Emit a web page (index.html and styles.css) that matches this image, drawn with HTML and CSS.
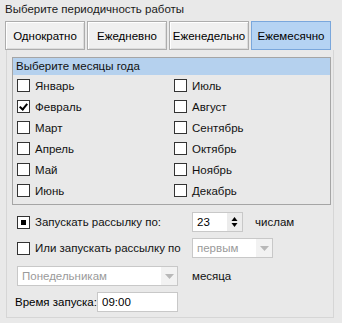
FILE: index.html
```html
<!DOCTYPE html>
<html>
<head>
    <title>Периодичность</title>
    <link rel="stylesheet" href="styles.css">
</head>
<body>
    <div class="window">
        <div class="title">Выберите периодичность работы</div>
        <div class="tabs">
            <button class="tab">Однократно</button>
            <button class="tab">Ежедневно</button>
            <button class="tab">Еженедельно</button>
            <button class="tab active">Ежемесячно</button>
        </div>
        <div class="panel">
            <div class="group">
                <div class="group-head">Выберите месяцы года</div>
                <div class="months">
                    <label class="row"><span class="box"></span>Январь</label>
                    <label class="row"><span class="box"></span>Июль</label>
                    <label class="row"><span class="box checked"></span>Февраль</label>
                    <label class="row"><span class="box"></span>Август</label>
                    <label class="row"><span class="box"></span>Март</label>
                    <label class="row"><span class="box"></span>Сентябрь</label>
                    <label class="row"><span class="box"></span>Апрель</label>
                    <label class="row"><span class="box"></span>Октябрь</label>
                    <label class="row"><span class="box"></span>Май</label>
                    <label class="row"><span class="box"></span>Ноябрь</label>
                    <label class="row"><span class="box"></span>Июнь</label>
                    <label class="row"><span class="box"></span>Декабрь</label>
                </div>
            </div>

            <div class="line line-first">
                <label class="row wide"><span class="box partial"></span>Запускать рассылку по:</label>
                <div class="spin">
                    <span class="spin-val">23</span>
                    <span class="spin-btn">
                        <svg width="7" height="12" viewBox="0 0 7 12"><path d="M3.5 1 L6.5 5 H0.5 Z M3.5 11 L6.5 7 H0.5 Z" fill="#000"/></svg>
                    </span>
                </div>
                <span class="after">числам</span>
            </div>

            <div class="line">
                <label class="row wide"><span class="box"></span>Или запускать рассылку по</label>
                <div class="combo small">
                    <span class="combo-val">первым</span>
                    <span class="combo-btn"><svg width="9" height="5" viewBox="0 0 9 5"><path d="M0 0 H9 L4.5 5 Z" fill="#b8b8b8"/></svg></span>
                </div>
            </div>

            <div class="line line-day">
                <div class="combo big">
                    <span class="combo-val">Понедельникам</span>
                    <span class="combo-btn"><svg width="9" height="5" viewBox="0 0 9 5"><path d="M0 0 H9 L4.5 5 Z" fill="#b8b8b8"/></svg></span>
                </div>
                <span class="after month">месяца</span>
            </div>

            <div class="line time">
                <span class="time-label">Время запуска:</span>
                <div class="field">09:00</div>
            </div>
        </div>
    </div>
</body>
</html>
```

FILE: styles.css
```css
body {
    margin: 0;
    background: #e9e9e9;
    font-family: "Liberation Sans", Arial, sans-serif;
    font-size: 11.5px;
    color: #000;
}
.window {
    padding: 2px 8px 0 5px;
    width: 329px;
    white-space: nowrap;
}
.title {
    height: 19px;
    line-height: 15px;
    color: #1a1a1a;
}
.tabs {
    display: flex;
    gap: 2px;
}
.tab {
    width: 80px;
    height: 29px;
    background: #f0f0f0;
    border: 1px solid #adadad;
    box-shadow: inset 1px 1px 0 #fff, inset -1px -1px 0 #dcdcdc;
    font-family: inherit;
    font-size: 11.5px;
    color: #000;
    padding: 0;
}
.tab.active {
    background: #b5d3f3;
    border-color: #7aa7dc;
    box-shadow: none;
}
.panel {
    margin: 0 0 0 1px;
    border: 1px solid #d6d6d6;
    border-top: none;
    padding: 7px 2px 4px 5px;
    height: 268px;
    box-sizing: border-box;
}
.group {
    border: 1px solid #a5a5a5;
    width: 319px;
    box-sizing: border-box;
}
.group-head {
    background: #b5d1ee;
    height: 17px;
    line-height: 16px;
    padding-left: 3px;
    color: #111;
}
.months {
    display: grid;
    grid-template-columns: 157px 1fr;
    padding: 0 0 3px 4px;
}
.row {
    display: flex;
    align-items: center;
    height: 21px;
    gap: 5px;
    color: #111;
}
.box {
    width: 13px;
    height: 13px;
    box-sizing: border-box;
    border: 1px solid #333;
    background: #fff;
    position: relative;
}
.box.checked::after {
    content: "";
    position: absolute;
    left: 3px;
    top: 1px;
    width: 3px;
    height: 6px;
    border: solid #000;
    border-width: 0 2px 2px 0;
    transform: rotate(40deg);
}
.box.partial::after {
    content: "";
    position: absolute;
    left: 3px;
    top: 3px;
    width: 5px;
    height: 5px;
    background: #000;
}
.line {
    display: flex;
    align-items: center;
    height: 20px;
    margin-top: 6px;
    padding-left: 5px;
}
.line-first {
    margin-top: 7px;
}
.line-day {
    margin-top: 8px;
}
.wide {
    width: 175px;
}
.spin {
    width: 51px;
    height: 20px;
    box-sizing: border-box;
    border: 1px solid #c8c8c8;
    background: #fff;
    display: flex;
    align-items: center;
    justify-content: space-between;
}
.spin-val {
    padding-left: 4px;
}
.spin-btn {
    width: 15px;
    height: 18px;
    background: #ececec;
    display: flex;
    align-items: center;
    justify-content: center;
}
.after {
    margin-left: 12px;
    color: #111;
}
.combo {
    height: 20px;
    box-sizing: border-box;
    border: 1px solid #c8c8c8;
    background: #fff;
    display: flex;
    align-items: center;
    justify-content: space-between;
    color: #9a9a9a;
}
.combo.small {
    width: 81px;
}
.combo.big {
    width: 161px;
}
.combo-val {
    padding-left: 4px;
}
.combo-btn {
    width: 16px;
    height: 18px;
    background: #f2f2f2;
    display: flex;
    align-items: center;
    justify-content: center;
}
.month {
    margin-left: 14px;
}
.time {
    padding-left: 3px;
}
.time-label {
    width: 82px;
}
.field {
    width: 81px;
    height: 20px;
    box-sizing: border-box;
    border: 1px solid #c8c8c8;
    background: #fff;
    padding-left: 4px;
    line-height: 18px;
}
```
